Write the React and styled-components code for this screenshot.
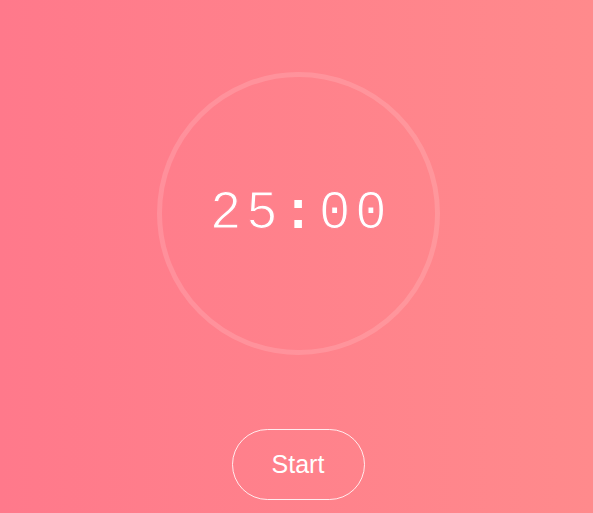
import React from "react";
import styled, { createGlobalStyle } from "styled-components";

const GlobalStyle = createGlobalStyle`
  html, body {
    margin: 0;
    padding: 0;
    height: 100%;
  }
  #root {
    height: 100%;
  }
`;

const Page = styled.div`
  height: 100vh;
  box-sizing: border-box;
  display: flex;
  flex-direction: column;
  align-items: center;
  padding-top: 72px;
  padding-left: 3px;
  background: linear-gradient(to right, #ff798b, #ff8a8c);
`;

const Dial = styled.div`
  width: 283px;
  height: 283px;
  box-sizing: border-box;
  border: 5px solid rgba(255, 255, 255, 0.14);
  border-radius: 50%;
  display: flex;
  align-items: center;
  justify-content: center;
`;

const Time = styled.div`
  font-family: "Liberation Mono", "Courier New", monospace;
  font-size: 53px;
  letter-spacing: 4.5px;
  margin-right: -5px;
  color: #fff;
  line-height: 1;
  margin-top: 2px;
  -webkit-text-stroke: 1.2px #ff8290;
`;

const Colon = styled.span`
  -webkit-text-stroke: 0;
  font-weight: 700;
`;

const StartButton = styled.button`
  margin-top: 74px;
  width: 133px;
  height: 71px;
  border: 1px solid rgba(255, 255, 255, 0.85);
  border-radius: 36px;
  background: transparent;
  color: #fff;
  font-family: "Liberation Sans", Arial, sans-serif;
  font-size: 25px;
  cursor: pointer;
`;

export default function App() {
  return (
    <>
      <GlobalStyle />
      <Page>
        <Dial>
          <Time>
            25<Colon>:</Colon>00
          </Time>
        </Dial>
        <StartButton>Start</StartButton>
      </Page>
    </>
  );
}
